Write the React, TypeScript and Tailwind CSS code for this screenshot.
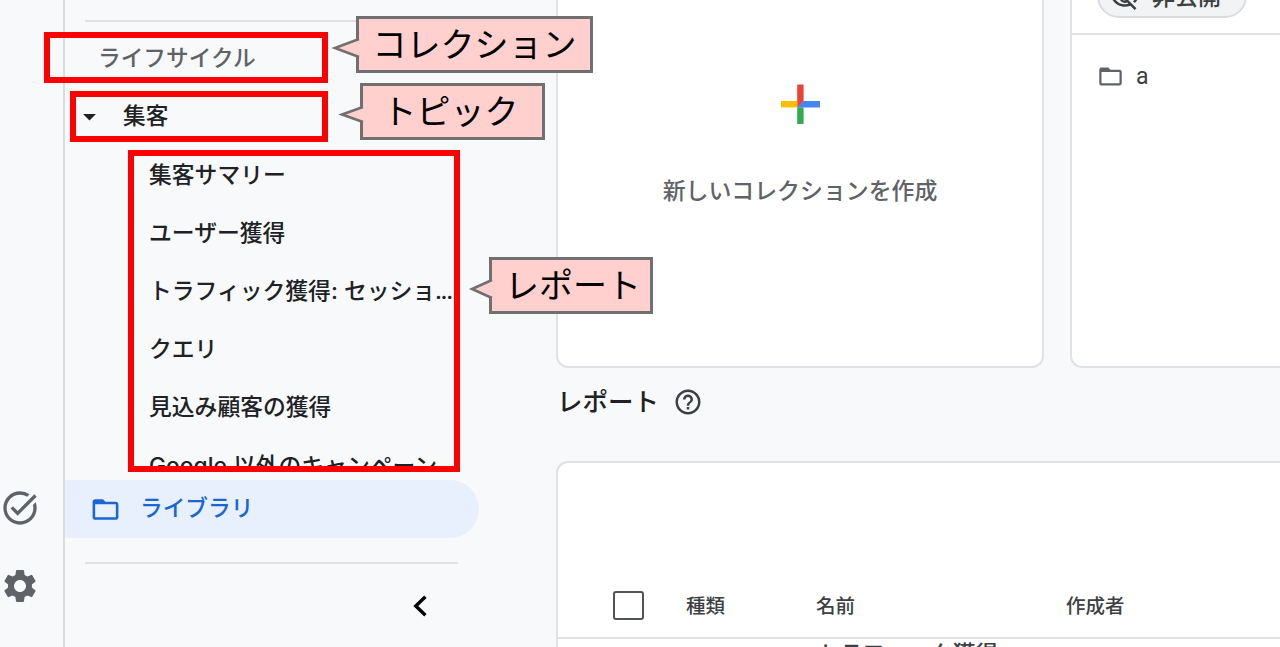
import {
    MdArrowDropDown,
    MdFolderOpen,
    MdHelpOutline,
    MdOutlineVisibilityOff,
    MdSettings,
    MdTaskAlt,
} from "react-icons/md";

type CalloutProps = {
    label: string,
    box: string,
    tip: string,
    points: string,
}

const reports = [
    "集客サマリー",
    "ユーザー獲得",
    "トラフィック獲得: セッショ...",
    "クエリ",
    "見込み顧客の獲得",
    "Google 以外のキャンペーン",
];

function Callout({ label, box, tip, points }: CalloutProps) {
    return (
        <div className={`absolute flex items-center justify-center border-[3px] border-[#707070] bg-[#ffd0ce] text-[34px] leading-none text-black ${box}`}>
            <span className="pb-[4px]">{label}</span>
            <svg className={`absolute h-[20px] overflow-visible ${tip}`}>
                <polyline points={points} fill="#ffd0ce" stroke="#707070" strokeWidth="2.6" />
            </svg>
        </div>
    );
}

function Rail() {
    return (
        <div className="flex w-[65px] shrink-0 flex-col border-r-2 border-[#dadce0] pt-[488px] text-[#5f6368]">
            <MdTaskAlt className="size-[40px]" />
            <MdSettings className="mt-[38px] size-[40px]" />
        </div>
    );
}

function Sidebar() {
    return (
        <nav className="flex w-[491px] shrink-0 flex-col pt-5 text-[22.7px] text-[#202124]">
            <div className="ml-5 h-[2px] w-[373px] shrink-0 bg-[#dfe1e4]" />
            <div className="flex h-[72px] shrink-0 items-center pl-[33px] pb-px font-medium text-[#5f6368]">ライフサイクル</div>
            <div className="flex h-[44px] shrink-0 items-center pl-[9px] font-medium">
                <MdArrowDropDown className="size-[31px]" />
                <span className="ml-[18px] pb-[2px]">集客</span>
            </div>
            <ul className="mt-[8px] h-[324px] shrink-0 overflow-hidden pl-[84px] font-['Inter','Noto_Sans_CJK_JP',sans-serif] text-[22.8px] font-medium">
                {reports.map((report) => (
                    <li key={report} className="flex h-[58.2px] items-center whitespace-nowrap">
                        {report.endsWith("...") ? (
                            <span>
                                {report.slice(0, -3)}
                                <span className="tracking-[-1.4px]">...</span>
                            </span>
                        ) : report}
                    </li>
                ))}
            </ul>
            <div className="mt-[10px] flex h-[58px] w-[414px] shrink-0 items-center rounded-r-full bg-[#e8f0fe] pl-[25px] font-medium text-[#1967d2]">
                <MdFolderOpen className="size-[31px]" />
                <span className="ml-[19px] pb-[3px]">ライブラリ</span>
            </div>
            <div className="mt-6 ml-5 h-[2px] w-[373px] shrink-0 bg-[#dfe1e4]" />
            <svg className="mt-[30px] ml-[345px] h-[24px] w-[20px]" viewBox="0 0 20 24" fill="none" stroke="#000" strokeWidth="3.4">
                <path d="M15.4 2.8 5.8 12l9.6 9.2" />
            </svg>
        </nav>
    );
}

function NewCollectionCard() {
    return (
        <div className="flex w-[488px] shrink-0 flex-col items-center rounded-b-xl border-2 border-t-0 border-[#e0e2e5] bg-white pt-[84px] text-[22.9px] font-medium text-[#5f6368]">
            <svg className="size-10" viewBox="0 0 40 40">
                <path d="M17.2 .5h6.4v17l-6.4 6.4z" fill="#ea4335" />
                <path d="M1 17h16.2v6.4H1z" fill="#fbbc04" />
                <path d="M17.2 23.4h6.4V40h-6.4z" fill="#34a853" />
                <path d="M23.6 17H40v6.4H17.2z" fill="#4285f4" />
            </svg>
            <p className="mt-[54px]">新しいコレクションを作成</p>
        </div>
    );
}

function CollectionCard() {
    return (
        <div className="w-[300px] shrink-0 rounded-b-xl border-2 border-t-0 border-[#e0e2e5] bg-white text-[#3c4043]">
            <div className="flex h-[35px] flex-col justify-end border-b-2 border-[#e0e2e5] pb-[15px] pl-[25px]">
                <div className="flex h-[44px] w-[150px] shrink-0 items-center rounded-full border-2 border-[#dadce0] bg-[#f1f3f4] pl-[11px] text-[23px] font-medium">
                    <MdOutlineVisibilityOff className="mt-[4px] size-[30px]" />
                    <span className="ml-[12px] pb-px">非公開</span>
                </div>
            </div>
            <div className="flex h-[83px] items-center pl-[25px]">
                <MdFolderOpen className="size-[27px] text-[#5f6368]" />
                <span className="ml-[12px] font-['Roboto'] text-[23px]">a</span>
            </div>
        </div>
    );
}

function ReportTable() {
    return (
        <div className="mt-auto h-[186px] w-[760px] shrink-0 overflow-hidden rounded-tl-xl border-2 border-b-0 border-[#e0e2e5] bg-white text-[#3c4043]">
            <div className="mt-[110px] flex h-[66px] items-center border-b-2 border-[#e0e2e5] pl-[55px] text-[19.5px] font-medium">
                <div className="h-[29px] w-[31px] rounded-[3px] border-[2.5px] border-[#50535a]" />
                <span className="ml-[42px] w-[130px]">種類</span>
                <span className="w-[250px]">名前</span>
                <span>作成者</span>
            </div>
            <div className="pl-[259px] text-[22.7px] leading-[28px] font-medium">トラフィック獲得</div>
        </div>
    );
}

export default function App() {
    return (
        <div className="relative flex h-[647px] w-[1280px] overflow-hidden bg-[#f8f9fb] font-['Noto_Sans_CJK_JP',sans-serif] leading-none">
            <Rail />
            <Sidebar />
            <main className="flex min-w-0 flex-1 flex-col overflow-hidden">
                <div className="flex h-[368px] shrink-0 gap-[26px]">
                    <NewCollectionCard />
                    <CollectionCard />
                </div>
                <div className="flex h-[69px] items-center pl-px text-[25.5px] font-medium text-[#202124]">
                    <h2 className="pb-[5px]">レポート</h2>
                    <MdHelpOutline className="mb-px ml-[14px] size-[30px] text-[#3c4043]" />
                </div>
                <ReportTable />
            </main>

            {/* annotations over the page */}
            <div className="absolute top-[32px] left-[44px] h-[51px] w-[284px] border-6 border-[#ff0000]" />
            <div className="absolute top-[91px] left-[70px] h-[51px] w-[258px] border-6 border-[#ff0000]" />
            <div className="absolute top-[150px] left-[128px] h-[322px] w-[332px] border-6 border-[#ff0000]" />
            <Callout label="コレクション" box="top-[16px] left-[356px] h-[57px] w-[237px]" tip="top-[19px] -left-[28px] w-[28px]" points="28,1 4,10 28,19" />
            <Callout label="トピック" box="top-[83px] left-[360px] h-[57px] w-[185px] pr-[4px]" tip="top-[18px] -left-[24px] w-[24px]" points="24,3 3,10.5 24,18" />
            <Callout label="レポート" box="top-[257px] left-[489px] h-[57px] w-[164px] pl-[4px]" tip="top-[19px] -left-[23px] w-[23px]" points="23,1 3,10 23,19" />
        </div>
    );
}
